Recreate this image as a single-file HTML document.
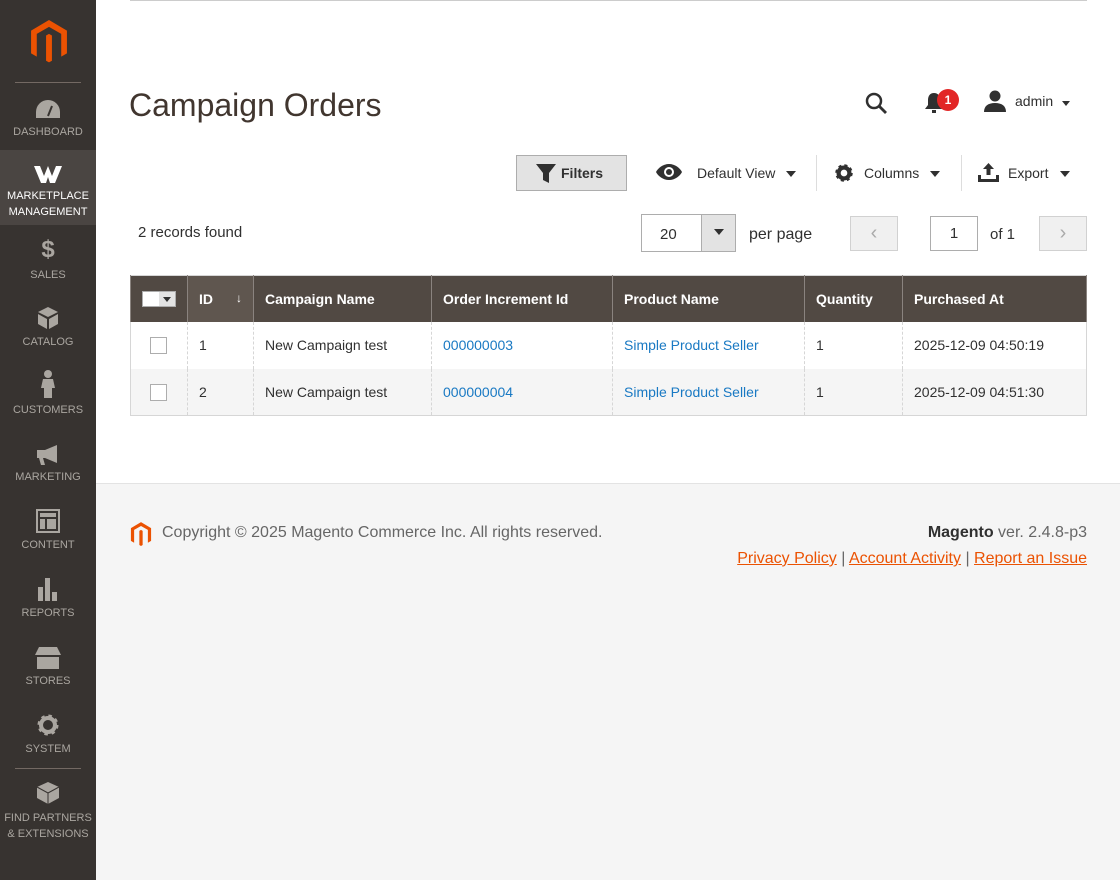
<!DOCTYPE html>
<html><head><meta charset="utf-8"><style>
*{margin:0;padding:0;box-sizing:border-box}
body{width:1120px;height:880px;position:relative;font-family:"Liberation Sans",sans-serif;background:#fff;overflow:hidden;color:#303030}
.a{position:absolute}
#side{left:0;top:0;width:96px;height:880px;background:#373330}
.nav{position:absolute;left:0;width:96px;text-align:center;color:#aaa6a0;font-size:11px;line-height:16px}
.nav svg{display:block;margin:0 auto 4px}
th{background:#514943;color:#fff;font-weight:bold;font-size:14px;text-align:left;padding:0 11px;height:46px;border-left:1px solid #8a837f;border-right:1px solid #8a837f}
td{font-size:14px;padding:0 11px;height:47px;border-left:1px dashed #d6d6d6;border-right:1px dashed #d6d6d6}
table{border-collapse:collapse;position:absolute;left:130px;top:275px;width:957px;border:1px solid #d6d6d6}
tr.g td{background:#f5f5f5}
a{color:#1979c3;text-decoration:none}
.cb{display:inline-block;width:17px;height:17px;border:1px solid #adadad;background:#fff;vertical-align:middle}
.btn{border:1px solid #adadad;background:#e3e3e3}
.car{display:inline-block;width:0;height:0;border-left:5px solid transparent;border-right:5px solid transparent;border-top:6px solid #303030;vertical-align:middle}
</style></head><body>
<div id="side" class="a">
<svg class="a" style="left:29px;top:20px" width="40" height="44" viewBox="0 0 24 27"><path fill="#eb5202" d="M12 0L23 6.5V20.5L19.5 22.5V8.5L12 4.2L4.5 8.5V22.5L1 20.5V6.5Z M10.2 9.5L12 8.5L13.8 9.5V25L12 26L10.2 25Z"/></svg>
<div class="a" style="left:15px;top:82px;width:66px;height:1px;background:#736963"></div>
<div class="nav" style="top:98px"><svg width="26" height="22" viewBox="0 0 26 22"><path fill="#aaa6a0" d="M13 2A12 12 0 0 0 1 14v6h24v-6A12 12 0 0 0 13 2z"/><path stroke="#373330" stroke-width="2" d="M13 18L17 8"/></svg>DASHBOARD</div>
<div class="a" style="left:0;top:150px;width:96px;height:75px;background:#4a4542"></div>
<div class="nav" style="top:164px;color:#fff"><svg width="30" height="20" viewBox="0 0 30 20"><path fill="#fff" d="M1 2h6l4 10 4-10 4 10 4-10h6l-7 17h-5l-2-6-2 6h-5z"/></svg>MARKETPLACE<br>MANAGEMENT</div>
<div class="nav" style="top:237px"><div style="font-size:24px;font-weight:bold;line-height:26px;margin-bottom:4px">$</div>SALES</div>
<div class="nav" style="top:306px"><svg width="24" height="24" viewBox="0 0 24 24"><path fill="#aaa6a0" d="M12 1l10 5-10 5-10-5z M2 8l9 5v10l-9-5z M22 8l-9 5v10l9-5z"/></svg>CATALOG</div>
<div class="nav" style="top:370px"><svg width="14" height="28" viewBox="0 0 14 28"><circle cx="7" cy="4" r="4" fill="#aaa6a0"/><path fill="#aaa6a0" d="M2 9h10l2 9h-3v10H3V18H0z"/></svg>CUSTOMERS</div>
<div class="nav" style="top:445px"><svg width="26" height="20" viewBox="0 0 26 20"><path fill="#aaa6a0" d="M2 5h8L22 0v18L10 13H8l2 7H6L4 13H2z"/></svg>MARKETING</div>
<div class="nav" style="top:509px"><svg width="24" height="24" viewBox="0 0 24 24"><path fill="none" stroke="#aaa6a0" stroke-width="2" d="M1 1h22v22H1z"/><path fill="#aaa6a0" d="M4 4h16v4H4zM4 10h5v10H4zM11 10h9v10h-9z"/></svg>CONTENT</div>
<div class="nav" style="top:577px"><svg width="24" height="24" viewBox="0 0 24 24"><path fill="#aaa6a0" d="M2 10h5v14H2zM9 1h5v23H9zM16 15h5v9h-5z"/></svg>REPORTS</div>
<div class="nav" style="top:647px"><svg width="26" height="22" viewBox="0 0 26 22"><path fill="#aaa6a0" d="M4 0h18l4 8H0zM2 10h22v12H2z"/></svg>STORES</div>
<div class="nav" style="top:713px"><svg width="24" height="24" viewBox="0 0 24 24"><circle cx="12" cy="12" r="8" fill="none" stroke="#aaa6a0" stroke-width="5" stroke-dasharray="3 3.3"/><circle cx="12" cy="12" r="7" fill="none" stroke="#aaa6a0" stroke-width="4"/></svg>SYSTEM</div>
<div class="a" style="left:15px;top:768px;width:66px;height:1px;background:#736963"></div>
<div class="nav" style="top:780px"><svg width="26" height="26" viewBox="0 0 26 26"><path fill="#aaa6a0" d="M13 2l11 5v11l-11 6-11-6V7z"/><path fill="none" stroke="#373330" d="M2 7l11 6 11-6M13 13v11"/></svg>FIND PARTNERS<br>&amp; EXTENSIONS</div>
</div>
<div class="a" style="left:130px;top:0;width:957px;height:1px;background:#ccc"></div>
<div class="a" style="left:129px;top:87px;font-size:32px;color:#41362f">Campaign Orders</div>
<svg class="a" style="left:864px;top:91px" width="24" height="24" viewBox="0 0 24 24"><circle cx="10" cy="10" r="7" fill="none" stroke="#303030" stroke-width="2.5"/><path d="M15 15l7 7" stroke="#303030" stroke-width="2.8"/></svg>
<svg class="a" style="left:924px;top:92px" width="20" height="22" viewBox="0 0 20 22"><path fill="#303030" d="M10 1c-4 0-6 3-6 7v5l-3 4h18l-3-4V8c0-4-2-7-6-7zM8 18h4v3H8z"/></svg>
<div class="a" style="left:937px;top:89px;width:22px;height:22px;border-radius:50%;background:#e22626;color:#fff;font-size:12px;font-weight:bold;text-align:center;line-height:22px">1</div>
<svg class="a" style="left:984px;top:90px" width="22" height="22" viewBox="0 0 22 22"><circle cx="11" cy="6" r="5.5" fill="#303030"/><path fill="#303030" d="M0 22c0-6 4-9 11-9s11 3 11 9z"/></svg>
<div class="a" style="left:1015px;top:93px;font-size:14px">admin</div>
<div class="a" style="left:1062px;top:95px"><span class="car" style="border-top-width:5px;border-left-width:4.5px;border-right-width:4.5px"></span></div>
<div class="a btn" style="left:516px;top:155px;width:111px;height:36px"></div>
<svg class="a" style="left:536px;top:164px" width="20" height="19" viewBox="0 0 20 19"><path fill="#303030" d="M0 0h20l-7 9v10l-6-3V9z"/></svg>
<div class="a" style="left:561px;top:165px;font-size:14px;font-weight:bold;color:#303030">Filters</div>
<svg class="a" style="left:656px;top:164px" width="26" height="16" viewBox="0 0 26 16"><path fill="#303030" d="M13 0C7 0 2 4 0 8c2 4 7 8 13 8s11-4 13-8C24 4 19 0 13 0z"/><circle cx="13" cy="8" r="5" fill="#fff"/><circle cx="13" cy="8" r="3" fill="#303030"/></svg>
<div class="a" style="left:697px;top:165px;font-size:14px">Default View</div>
<div class="a" style="left:786px;top:165px"><span class="car"></span></div>
<div class="a" style="left:816px;top:155px;width:1px;height:36px;background:#ddd"></div>
<svg class="a" style="left:834px;top:163px" width="20" height="20" viewBox="0 0 24 24"><circle cx="12" cy="12" r="8" fill="none" stroke="#303030" stroke-width="5" stroke-dasharray="3.2 3.1"/><circle cx="12" cy="12" r="6.5" fill="none" stroke="#303030" stroke-width="5"/></svg>
<div class="a" style="left:864px;top:165px;font-size:14px">Columns</div>
<div class="a" style="left:930px;top:165px"><span class="car"></span></div>
<div class="a" style="left:961px;top:155px;width:1px;height:36px;background:#ddd"></div>
<svg class="a" style="left:978px;top:163px" width="21" height="19" viewBox="0 0 21 19"><path fill="#303030" d="M10.5 0L16 6h-3.5v6h-4V6H5zM0 12h3v4h15v-4h3v7H0z"/></svg>
<div class="a" style="left:1008px;top:165px;font-size:14px">Export</div>
<div class="a" style="left:1060px;top:165px"><span class="car"></span></div>
<div class="a" style="left:138px;top:224px;font-size:15px">2 records found</div>
<div class="a" style="left:641px;top:214px;width:95px;height:38px;border:1px solid #adadad;background:#fff"></div>
<div class="a" style="left:701px;top:215px;width:34px;height:36px;background:#e3e3e3;border-left:1px solid #adadad;text-align:center;line-height:34px"><span class="car"></span></div>
<div class="a" style="left:660px;top:226px;font-size:15px">20</div>
<div class="a" style="left:749px;top:226px;font-size:16px;color:#303030">per page</div>
<div class="a" style="left:850px;top:216px;width:48px;height:35px;border:1px solid #d1d1d1;background:#f0f0f0;color:#aaa;font-size:20px;text-align:center;line-height:32px">‹</div>
<div class="a" style="left:930px;top:216px;width:48px;height:35px;border:1px solid #adadad;background:#fff;font-size:15px;text-align:center;line-height:34px">1</div>
<div class="a" style="left:990px;top:226px;font-size:15px">of 1</div>
<div class="a" style="left:1039px;top:216px;width:48px;height:35px;border:1px solid #d1d1d1;background:#f0f0f0;color:#aaa;font-size:20px;text-align:center;line-height:32px">›</div>
<table>
<tr><th style="width:57px;padding:0 0 0 11px"><span style="display:inline-block;width:34px;height:16px;background:#fff;border:1px solid #adadad;vertical-align:middle;position:relative"><span style="position:absolute;right:0;top:0;width:16px;height:14px;background:#e3e3e3;text-align:center;line-height:12px"><span class="car" style="border-top-width:5px;border-left-width:4px;border-right-width:4px"></span></span></span></th>
<th style="width:66px;background:#5f564f">ID <span style="float:right;font-weight:normal;font-size:12px">↓</span></th>
<th style="width:178px">Campaign Name</th><th style="width:181px">Order Increment Id</th><th style="width:192px">Product Name</th><th style="width:98px">Quantity</th><th>Purchased At</th></tr>
<tr><td style="padding-left:19px"><span class="cb"></span></td><td>1</td><td>New Campaign test</td><td><a>000000003</a></td><td><a>Simple Product Seller</a></td><td>1</td><td>2025-12-09 04:50:19</td></tr>
<tr class="g"><td style="padding-left:19px"><span class="cb"></span></td><td>2</td><td>New Campaign test</td><td><a>000000004</a></td><td><a>Simple Product Seller</a></td><td>1</td><td>2025-12-09 04:51:30</td></tr>
</table>
<div class="a" style="left:96px;top:483px;width:1024px;height:397px;background:#f5f5f5;border-top:1px solid #e3e3e3"></div>
<svg class="a" style="left:130px;top:522px" width="22" height="25" viewBox="0 0 24 27"><path fill="#eb5202" d="M12 0L23 6.5V20.5L19.5 22.5V8.5L12 4.2L4.5 8.5V22.5L1 20.5V6.5Z M10.2 9.5L12 8.5L13.8 9.5V25L12 26L10.2 25Z"/></svg>
<div class="a" style="left:162px;top:524px;font-size:16px;color:#666">Copyright © 2025 Magento Commerce Inc. All rights reserved.</div>
<div class="a" style="right:33px;top:524px;font-size:16px;color:#666"><b style="color:#303030">Magento</b> ver. 2.4.8-p3</div>
<div class="a" style="right:33px;top:550px;font-size:16px;color:#666"><u style="color:#eb5202">Privacy Policy</u> | <u style="color:#eb5202">Account Activity</u> | <u style="color:#eb5202">Report an Issue</u></div>
</body></html>
